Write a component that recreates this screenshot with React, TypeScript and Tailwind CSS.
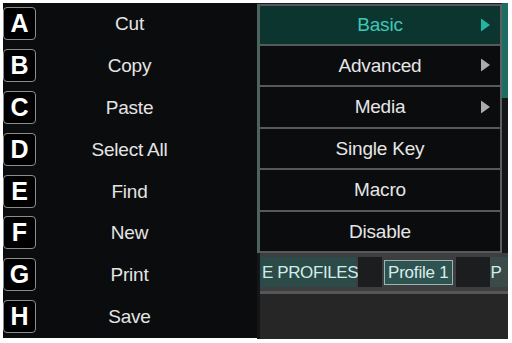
const letters = [
  ["A", "Cut"],
  ["B", "Copy"],
  ["C", "Paste"],
  ["D", "Select All"],
  ["E", "Find"],
  ["F", "New"],
  ["G", "Print"],
  ["H", "Save"],
];

const menu = [
  { label: "Basic", sub: true, active: true },
  { label: "Advanced", sub: true },
  { label: "Media", sub: true },
  { label: "Single Key" },
  { label: "Macro" },
  { label: "Disable" },
];

function Arrow({ active }: { active?: boolean }) {
  return (
    <svg width="9" height="13" viewBox="0 0 9 13" className="absolute right-[10px] top-1/2 -translate-y-1/2">
      <polygon points="0,0 9,6.5 0,13" fill={active ? "#23b5a3" : "#a9abad"} />
    </svg>
  );
}

export default function App() {
  return (
    <div className="w-[512px] h-[343px] bg-white flex pl-[3px] pt-[3px] font-['Liberation_Sans',Arial,sans-serif] overflow-hidden">
      {/* shortcut list */}
      <div className="w-[254px] h-[335px] bg-[#0b0c0e] flex flex-col">
        {letters.map(([k, label]) => (
          <div key={k} className="h-[41.8px] flex items-center">
            <div className="w-[33px] h-[33px] rounded-[4px] border border-[#8a8c8e] bg-black flex items-center justify-center text-white font-bold text-[25px] leading-none">
              {k}
            </div>
            <div className="flex-1 pr-[34px] text-center text-[#e4e4e4] text-[19px] leading-none tracking-[-0.2px]">{label}</div>
          </div>
        ))}
      </div>

      {/* submenu + background */}
      <div className="w-[251px] h-[336px] flex flex-col bg-[#1a1c1d]">
        <div className="flex">
          <div className="w-[245px] mt-[1px] border-l-[3px] border-l-[#4d6360] border-r-2 border-r-[#5c6062] bg-[#0b0c0e]">
            {menu.map((m, i) => (
              <div
                key={m.label}
                className={`relative h-[41.5px] flex items-center justify-center text-[19px] leading-none tracking-[-0.2px] border-[#56595b] border-b-2 ${i === 0 ? "border-t-2 bg-[#0d3530] text-[#3ec7b6]" : "text-[#e6e6e6]"}`}
              >
                {m.label}
                {m.sub && <Arrow active={m.active} />}
              </div>
            ))}
          </div>
          <div className="w-[6px] flex flex-col">
            <div className="h-[95px] bg-[#1d6d62]" />
            <div className="flex-1 bg-[#141617]" />
          </div>
        </div>

        {/* profiles tab strip */}
        <div className="flex-1 bg-[#262627] border-l-[3px] border-l-[#141516] flex flex-col">
          <div className="h-[38px] bg-[#3d3e3f] flex items-center text-[17px] leading-none whitespace-nowrap overflow-hidden">
            <div className="shrink-0 w-[96px] h-[30px] pl-[2px] bg-[#2c4a47] flex items-center text-[#cfeeea] tracking-[-0.4px]">E PROFILES</div>
            <div className="shrink-0 w-[24px] h-[30px] bg-[#1c1d1e] ml-[2px]" />
            <div className="shrink-0 h-[25px] px-[3px] ml-[2px] bg-[#2f5350] border border-[#9fb5b2] flex items-center text-[#d9efec] tracking-[-0.2px]">Profile 1</div>
            <div className="shrink-0 w-[34px] h-[30px] bg-[#1c1d1e] ml-[3px]" />
            <div className="shrink-0 h-[30px] pl-[1px] bg-[#3a4a48] flex items-center text-[#cfeeea] flex-1">P</div>
          </div>
          <div className="h-[3px] bg-[#555657]" />
        </div>
      </div>
    </div>
  );
}
